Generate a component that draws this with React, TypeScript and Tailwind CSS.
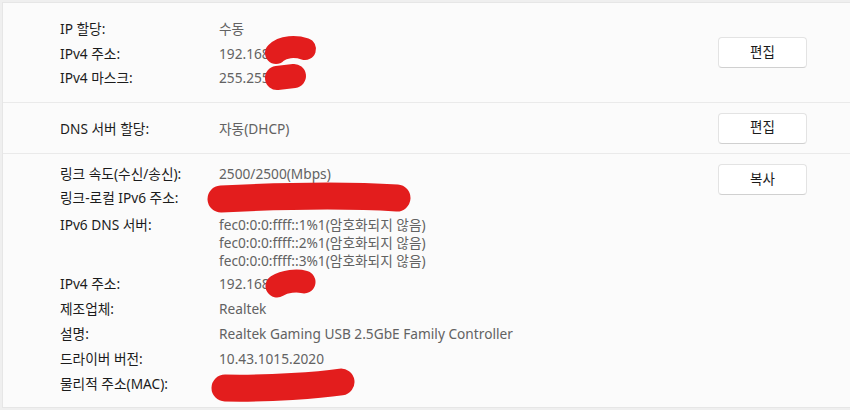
import React from "react";

const font = { fontFamily: '"Noto Sans", "Noto Sans CJK KR", sans-serif' };

function Row({ label, value, h = "h-[24.5px]" }: { label: string; value: React.ReactNode; h?: string }) {
  return (
    <div className={`flex items-center ${h}`}>
      <div className="w-[159px] shrink-0 text-[#1b1b1b]">{label}</div>
      <div className="text-[#626262]">{value}</div>
    </div>
  );
}

function Btn({ children }: { children: React.ReactNode }) {
  return (
    <button className="w-[89px] h-[31px] shrink-0 rounded-[4px] border border-[#e3e3e3] border-b-[#d0d0d0] bg-white text-[#1b1b1b] text-[13.5px] leading-none">
      {children}
    </button>
  );
}

export default function App() {
  return (
    <div className="relative w-[850px] h-[410px] overflow-hidden bg-[#efefef] text-[13.7px]" style={font}>
      <div className="ml-[2px] mt-[2px] w-[870px] h-[406px] border border-r-0 border-[#e6e6e6] bg-[#fbfbfb]">
        {/* Section 1 */}
        <div className="flex items-center h-[99px] pl-[57px]">
          <div className="w-[658px] pt-[3px]">
            <Row label="IP 할당:" value="수동" />
            <Row label="IPv4 주소:" value="192.168" />
            <Row label="IPv4 마스크:" value="255.255" />
          </div>
          <Btn>편집</Btn>
        </div>
        {/* Section 2 */}
        <div className="flex items-center h-[51px] pl-[57px] border-t border-[#eaeaea]">
          <div className="w-[658px] pt-[3px]">
            <Row label="DNS 서버 할당:" value="자동(DHCP)" />
          </div>
          <Btn>편집</Btn>
        </div>
        {/* Section 3 */}
        <div className="flex items-start h-[254px] pl-[57px] pt-[8px] border-t border-[#eaeaea]">
          <div className="w-[658px]">
            <Row label="링크 속도(수신/송신):" value="2500/2500(Mbps)" />
            <Row label="링크-로컬 IPv6 주소:" value="" h="h-[24.5px]" />
            <div className="flex pt-[5px] pb-[2px]">
              <div className="w-[159px] shrink-0 text-[#1b1b1b] leading-[18px]">IPv6 DNS 서버:</div>
              <div className="text-[#626262] leading-[18px] text-[13.7px]">
                <div>fec0:0:0:ffff::1%1(암호화되지 않음)</div>
                <div>fec0:0:0:ffff::2%1(암호화되지 않음)</div>
                <div>fec0:0:0:ffff::3%1(암호화되지 않음)</div>
              </div>
            </div>
            <Row label="IPv4 주소:" value="192.168" h="h-[25px]" />
            <Row label="제조업체:" value="Realtek" h="h-[25px]" />
            <Row label="설명:" value="Realtek Gaming USB 2.5GbE Family Controller" h="h-[25px]" />
            <Row label="드라이버 버전:" value="10.43.1015.2020" h="h-[25px]" />
            <Row label="물리적 주소(MAC):" value="" h="h-[25.5px]" />
          </div>
          <div className="pt-[2px]">
            <Btn>복사</Btn>
          </div>
        </div>
      </div>
      <svg className="pointer-events-none absolute left-0 top-0" width="850" height="410" viewBox="0 0 850 410">
        <g stroke="#e31d1d" fill="none" strokeLinecap="round" strokeLinejoin="round">
          <path d="M276 53 C283 46 296 46 305 49" strokeWidth="22" />
          <path d="M277 78 L294 76" strokeWidth="24" />
          <path d="M221 199 C280 196 350 195 397 198" strokeWidth="27" />
          <path d="M277 286 C285 281 297 280 304 282" strokeWidth="23" />
          <path d="M225 388 C270 389 320 385 341 382" strokeWidth="27" />
        </g>
      </svg>
    </div>
  );
}
